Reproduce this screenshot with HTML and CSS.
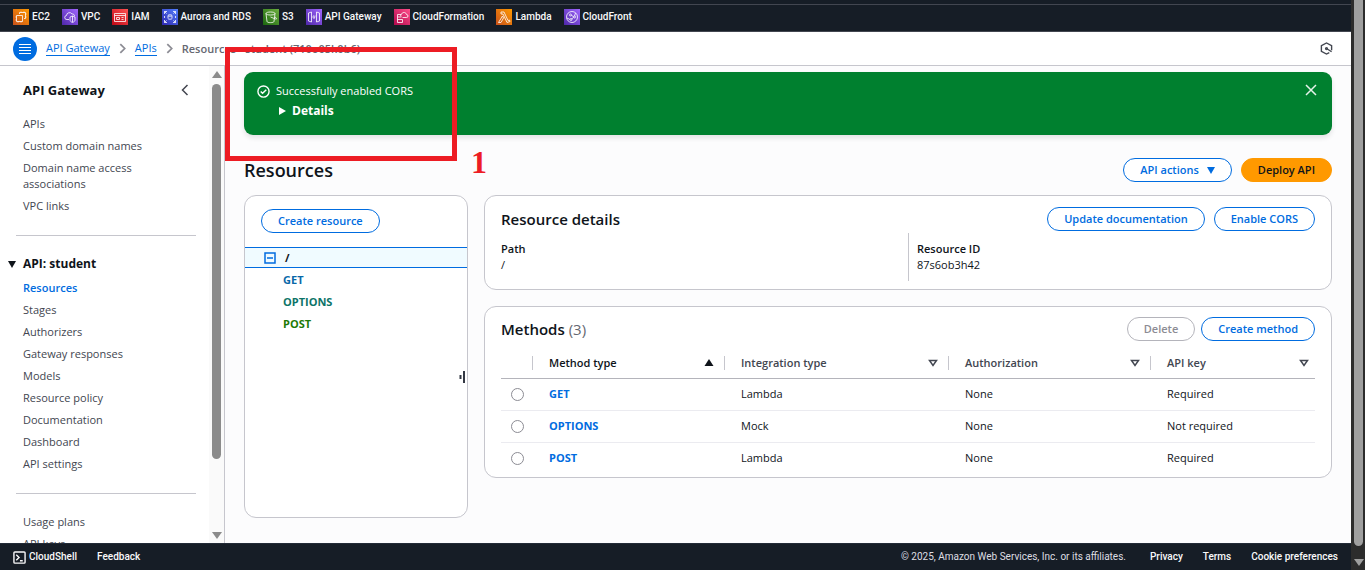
FILE: index.html
```html
<!doctype html>
<html lang="en">

<head>
  <meta charset="UTF-8" />
  <meta name="viewport" content="width=device-width, initial-scale=1.0" />
  <title>API Gateway - Resources</title>
  <link rel="stylesheet" href="styles.css">
</head>

<body>
  <div class="page">
    <nav class="favorites" aria-label="Favorites">
      <a href="#">
        <svg class="service orange" viewBox="0 0 16 16"><path d="M3.500 6.500h6v6h-6zM6.500 5v-1.500h6v6H11M2.500 8h1M2.500 11h1M5 13.500v-1M8 13.500v-1M8 2.500v1M11 2.500v1M13.500 5h-1M13.500 8h-1" /></svg>
        EC2
      </a>
      <a href="#">
        <svg class="service purple" viewBox="0 0 16 16"><path d="M7 10.500H5a2 2 0 0 1-.5-4 3 3 0 0 1 5.500-1.500 2 2 0 0 1 2.500 2M8 8l2.500-1L13 8v3c0 1-1 2-2.500 2.500C9 13 8 12 8 11zM10.500 7v6" /></svg>
        VPC
      </a>
      <a href="#">
        <svg class="service red" viewBox="0 0 16 16"><path d="M2.500 4.500h11v8h-11zM2.500 6.500h11M4.500 8.500h3v2h-3zM9.500 8.500h2M9.500 10.500h2" /></svg>
        IAM
      </a>
      <a href="#">
        <svg class="service blue" viewBox="0 0 16 16"><path d="M2.500 5V2.500H5M11 2.500h2.500V5M2.500 11v2.500H5M13.500 11v2.500H11M2.500 2.500l2 2M13.500 2.500l-2 2M2.500 13.500l2-2M13.500 13.500l-2-2M6 6.500c0-1 4-1 4 0v3c0 1-4 1-4 0zM6 6.500c0 1 4 1 4 0M2.500 7v2M13.500 7v2" /></svg>
        Aurora and RDS
      </a>
      <a href="#">
        <svg class="service green" viewBox="0 0 16 16"><path d="M3 4.500c0-2 9-2 9 0s-9 2-9 0l1 8c0 1.500 7 1.500 7 0l1-8M7.500 8l5 2c1.500.5 1.500-1-.5-2" /></svg>
        S3
      </a>
      <a href="#">
        <svg class="service purple" viewBox="0 0 16 16"><path d="M5.500 3v10l-3-1V4zM10.500 3v10l3-1V4zM7.500 6.500L7 8l.5 1.500M9 6.500L8.500 9.500" /></svg>
        API Gateway
      </a>
      <a href="#">
        <svg class="service pink" viewBox="0 0 16 16"><path d="M3.500 5.500h4M3.500 5.500v8h5v-3h-5M3.500 8h4M8.500 8.500h4a1.500 1.500 0 0 0 0-3 2.500 2.500 0 0 0-4.500-1 2 2 0 0 0-1 3" /></svg>
        CloudFormation
      </a>
      <a href="#">
        <svg class="service orange" viewBox="0 0 16 16"><path d="M5 3h3l4 8.500 1.500-.5.5 1.500-3 1L7 5H5zM6.500 7l1 2-2.500 4.500H2.500z" /></svg>
        Lambda
      </a>
      <a href="#">
        <svg class="service purple" viewBox="0 0 16 16"><circle cx="8" cy="8" r="5.500" /><circle cx="6.500" cy="6" r="1" /><circle cx="10.500" cy="8" r="1" /><circle cx="7" cy="10.500" r="1" /><path d="M7.500 6.500l2 1M9.500 8.500l-2 1.500M3 9l3 1.500M10.500 7l1-3" /></svg>
        CloudFront
      </a>
    </nav>

    <header class="breadcrumb-bar">
      <button class="menu-button" type="button" aria-label="Open navigation">
        <svg viewBox="0 0 24 24"><path d="M6 7.500h12M6 10.500h12M6 13.500h12M6 16.500h12" /></svg>
      </button>
      <nav class="breadcrumbs" aria-label="Breadcrumbs">
        <a href="#">API Gateway</a>
        <svg class="separator" viewBox="0 0 8 12"><path d="M1.500 1l5 5-5 5" /></svg>
        <a href="#">APIs</a>
        <svg class="separator" viewBox="0 0 8 12"><path d="M1.500 1l5 5-5 5" /></svg>
        <span>Resources - student (710o05k0b6)</span>
      </nav>
      <button class="tools-button" type="button" aria-label="Open tools">
        <svg viewBox="0 0 14 14"><path d="M12.500 9V4L7 1 1.500 4v6L7 13l3-1.500M7 7l5.500 3.500" /><circle cx="7" cy="7" r="1" /></svg>
      </button>
    </header>

    <div class="workspace">
      <aside class="sidebar">
        <div class="sidebar-content">
          <div class="sidebar-title">
            <h2>API Gateway</h2>
            <button type="button" aria-label="Close navigation">
              <svg viewBox="0 0 8 12"><path d="M6.500 1l-5 5 5 5" /></svg>
            </button>
          </div>
          <ul>
            <li><a href="#">APIs</a></li>
            <li><a href="#">Custom domain names</a></li>
            <li><a href="#">Domain name access associations</a></li>
            <li><a href="#">VPC links</a></li>
          </ul>
          <hr>
          <h3>API: student</h3>
          <ul>
            <li><a class="active" href="#">Resources</a></li>
            <li><a href="#">Stages</a></li>
            <li><a href="#">Authorizers</a></li>
            <li><a href="#">Gateway responses</a></li>
            <li><a href="#">Models</a></li>
            <li><a href="#">Resource policy</a></li>
            <li><a href="#">Documentation</a></li>
            <li><a href="#">Dashboard</a></li>
            <li><a href="#">API settings</a></li>
          </ul>
          <hr>
          <ul>
            <li><a href="#">Usage plans</a></li>
            <li><a href="#">API keys</a></li>
          </ul>
        </div>
        <div class="scrollbar">
          <span class="arrow-up"></span>
          <span class="thumb"></span>
          <span class="arrow-down"></span>
        </div>
      </aside>

      <main class="content">
        <section class="flash" role="status">
          <svg class="flash-icon" viewBox="0 0 14 14"><circle cx="7" cy="7" r="6" /><path d="M4 7l2 2 4-4" /></svg>
          <div class="flash-text">
            <p>Successfully enabled CORS</p>
            <button type="button">Details</button>
          </div>
          <button class="flash-close" type="button" aria-label="Dismiss">
            <svg viewBox="0 0 12 12"><path d="M1 1l10 10M11 1L1 11" /></svg>
          </button>
        </section>

        <div class="page-header">
          <h1>Resources</h1>
          <div class="actions">
            <button class="btn with-caret" type="button">API actions</button>
            <button class="btn primary" type="button">Deploy API</button>
          </div>
        </div>

        <div class="panels">
          <section class="card tree">
            <button class="btn" type="button">Create resource</button>
            <div class="tree-root">
              <button type="button" aria-label="Collapse">
                <svg viewBox="0 0 12 12"><path d="M1 1h10v10H1zM3 6h6" /></svg>
              </button>
              <span>/</span>
            </div>
            <ul>
              <li><a class="get" href="#">GET</a></li>
              <li><a class="options" href="#">OPTIONS</a></li>
              <li><a class="post" href="#">POST</a></li>
            </ul>
            <svg class="resize-handle" viewBox="0 0 6 12"><path d="M1.500 4v4M5 0v12" /></svg>
          </section>

          <div class="details">
            <section class="card resource">
              <div class="card-header">
                <h2>Resource details</h2>
                <div class="actions">
                  <button class="btn" type="button">Update documentation</button>
                  <button class="btn" type="button">Enable CORS</button>
                </div>
              </div>
              <dl>
                <div>
                  <dt>Path</dt>
                  <dd>/</dd>
                </div>
                <div>
                  <dt>Resource ID</dt>
                  <dd>87s6ob3h42</dd>
                </div>
              </dl>
            </section>

            <section class="card methods">
              <div class="card-header">
                <h2>Methods <span>(3)</span></h2>
                <div class="actions">
                  <button class="btn" type="button" disabled>Delete</button>
                  <button class="btn" type="button">Create method</button>
                </div>
              </div>
              <table>
                <colgroup>
                  <col class="col-select">
                  <col class="col-method">
                  <col class="col-integration">
                  <col class="col-auth">
                  <col>
                </colgroup>
                <thead>
                  <tr>
                    <th><div></div></th>
                    <th class="sorted"><div>Method type <svg viewBox="0 0 10 8"><path d="M5 0l4.500 7h-9z" /></svg></div></th>
                    <th><div>Integration type <svg viewBox="0 0 10 8"><path d="M1.500 1.500h7L5 6.500z" /></svg></div></th>
                    <th><div>Authorization <svg viewBox="0 0 10 8"><path d="M1.500 1.500h7L5 6.500z" /></svg></div></th>
                    <th><div>API key <svg viewBox="0 0 10 8"><path d="M1.500 1.500h7L5 6.500z" /></svg></div></th>
                  </tr>
                </thead>
                <tbody>
                  <tr>
                    <td><input type="radio" name="method" aria-label="GET"></td>
                    <td><a href="#">GET</a></td>
                    <td>Lambda</td>
                    <td>None</td>
                    <td>Required</td>
                  </tr>
                  <tr>
                    <td><input type="radio" name="method" aria-label="OPTIONS"></td>
                    <td><a href="#">OPTIONS</a></td>
                    <td>Mock</td>
                    <td>None</td>
                    <td>Not required</td>
                  </tr>
                  <tr>
                    <td><input type="radio" name="method" aria-label="POST"></td>
                    <td><a href="#">POST</a></td>
                    <td>Lambda</td>
                    <td>None</td>
                    <td>Required</td>
                  </tr>
                </tbody>
              </table>
            </section>
          </div>
        </div>
      </main>
    </div>

    <footer class="footer">
      <a href="#">
        <svg viewBox="0 0 14 14"><rect x="1" y="1" width="12" height="12" rx="1" /><path d="M3.500 4l3 3-3 3M7.500 10.500h3" /></svg>
        CloudShell
      </a>
      <a href="#">Feedback</a>
      <p>© 2025, Amazon Web Services, Inc. or its affiliates.</p>
      <a href="#">Privacy</a>
      <a href="#">Terms</a>
      <a href="#">Cookie preferences</a>
    </footer>
  </div>

  <div class="page-scrollbar">
    <span class="thumb"></span>
    <span class="arrow-down"></span>
  </div>

  <!-- step marker -->
  <div class="callout"></div>
  <span class="callout-number">1</span>
</body>

</html>
```
FILE: styles.css
```css
* {
  box-sizing: border-box;
}

body {
  margin: 0;
  height: 100vh;
  display: flex;
  overflow: hidden;
  font-family: "Open Sans", "Noto Sans", sans-serif;
  font-size: 11px;
  line-height: 16px;
  color: #0f141a;
}

h1,
h2,
h3,
p,
ul,
dl,
dd {
  margin: 0;
  padding: 0;
}

ul {
  list-style: none;
}

a {
  color: inherit;
  text-decoration: none;
}

button {
  padding: 0;
  border: none;
  background: none;
  color: inherit;
  font: inherit;
  cursor: pointer;
}

svg {
  display: block;
  flex: none;
  fill: none;
  stroke: currentColor;
}

.page {
  flex: 1;
  min-width: 0;
  display: flex;
  flex-direction: column;
}

/* Top bar */
.favorites {
  flex: none;
  height: 32px;
  padding: 0 13px 1px;
  border-top: 4px solid #161d26;
  border-bottom: 1px solid #424650;
  box-shadow: inset 0 1px #424650;
  display: flex;
  align-items: center;
  gap: 12px;
  background: #161d26;
  color: #f9f9fa;
  font-family: Roboto, sans-serif;
  font-size: 10px;
  font-weight: 500;
}

.favorites a {
  display: flex;
  align-items: center;
  gap: 3px;
}

.service {
  width: 16px;
  height: 16px;
  color: rgba(255, 255, 255, 0.8);
}

.orange {
  background: linear-gradient(45deg, #c8511b, #f90);
}

.purple {
  background: linear-gradient(45deg, #4d27a8, #a166ff);
}

.red {
  background: linear-gradient(45deg, #bd0816, #ff5252);
}

.blue {
  background: linear-gradient(45deg, #2e27ad, #527fff);
}

.green {
  background: linear-gradient(45deg, #1b660f, #6cae3e);
}

.pink {
  background: linear-gradient(45deg, #b0084d, #ff4f8b);
}

.breadcrumb-bar {
  flex: none;
  height: 34px;
  padding: 0 18px 0 13px;
  border-bottom: 1px solid #c6c6cd;
  display: flex;
  align-items: center;
  background: #fff;
}

.menu-button {
  width: 24px;
  height: 24px;
  border-radius: 50%;
  background: #006ce0;
  color: #fff;
}

.menu-button svg {
  stroke-width: 1;
}

.breadcrumbs {
  flex: 1;
  margin-left: 9px;
  display: flex;
  align-items: center;
  gap: 9px;
  color: #656871;
  font-weight: 600;
}

.breadcrumbs a {
  border-bottom: 1px solid #006ce0;
  color: #006ce0;
  font-weight: 400;
  line-height: 14px;
}

.separator {
  width: 7px;
  height: 11px;
  color: #8c8c94;
  stroke-width: 2;
}

.tools-button svg {
  width: 13px;
  height: 13px;
  color: #424650;
  stroke-width: 1.5;
}

.workspace {
  flex: 1;
  min-height: 0;
  display: flex;
}

/* Side navigation */
.sidebar {
  flex: none;
  width: 225px;
  border-right: 1px solid #c6c6cd;
  display: flex;
  overflow: hidden;
  background: #fff;
}

.sidebar-content {
  flex: 1;
  padding: 15px 13px 0 16px;
  color: #424650;
}

.sidebar-title {
  margin-bottom: 17px;
  padding: 0 7px;
  display: flex;
  align-items: center;
  justify-content: space-between;
  color: #0f141a;
}

.sidebar-title h2 {
  font-size: 13px;
  line-height: 18px;
}

.sidebar-title svg {
  width: 8px;
  height: 12px;
  color: #424650;
  stroke-width: 1.5;
}

.sidebar-content ul {
  padding: 0 40px 0 7px;
  display: grid;
  gap: 6px;
}

.sidebar-content hr {
  margin: 21px 0 20px;
  border: none;
  border-top: 1px solid #c6c6cd;
}

.sidebar-content h3 {
  margin-bottom: 8px;
  display: flex;
  align-items: center;
  gap: 7px;
  margin-left: -8px;
  color: #0f141a;
  font-size: 12px;
}

.sidebar-content h3::before {
  content: "";
  border: 4px solid transparent;
  border-top: 7px solid #0f141a;
  border-bottom: none;
}

.active {
  color: #006ce0;
  font-weight: 600;
}

.scrollbar {
  width: 15px;
  padding: 5px 3px 4px;
  display: flex;
  flex-direction: column;
  align-items: center;
  background: #fafafa;
}

.scrollbar .thumb {
  width: 9px;
  height: 375px;
  margin: 6px 0 auto;
  border-radius: 5px;
  background: #8b8b8b;
}

.arrow-up,
.arrow-down {
  border: 5px solid transparent;
}

.arrow-up {
  border-top: none;
  border-bottom: 7px solid #8b8b8b;
}

.arrow-down {
  border-top: 7px solid #8b8b8b;
  border-bottom: none;
}

/* Main column */
.content {
  flex: 1;
  min-width: 0;
  padding: 6px 19px 25px;
  display: flex;
  flex-direction: column;
  background: #fcfcfd;
}

.flash {
  padding: 11px 15px 15px 13px;
  border-radius: 9px;
  display: flex;
  align-items: flex-start;
  gap: 6px;
  background: #00802f;
  box-shadow: 0 3px 5px rgba(0, 7, 22, 0.1);
  color: #fff;
}

.flash-icon {
  width: 13px;
  height: 13px;
  margin-top: 2px;
  stroke-width: 1.5;
}

.flash-text {
  flex: 1;
}

.flash-text button {
  margin: 3px 0 0 3px;
  display: flex;
  align-items: center;
  gap: 6px;
  font-size: 12px;
  font-weight: 700;
  line-height: 18px;
}

.flash-text button::before {
  content: "";
  border: 4px solid transparent;
  border-left: 7px solid #fff;
  border-right: none;
}

.flash-close svg {
  width: 12px;
  height: 12px;
  margin-top: 1px;
  stroke-width: 1.5;
  opacity: 0.9;
}

.page-header {
  margin: 23px 0 13px;
  display: flex;
  align-items: center;
  justify-content: space-between;
}

.page-header h1 {
  font-size: 18px;
  font-weight: 600;
  line-height: 24px;
}

.actions {
  display: flex;
  gap: 9px;
}

.btn {
  height: 24px;
  padding: 0 16px;
  border: 1px solid #006ce0;
  border-radius: 12px;
  background: #fff;
  color: #006ce0;
  font-weight: 600;
}

.btn.primary {
  border-color: #f90;
  background: #f90;
  color: #0f141a;
}

.btn:disabled {
  border-color: #b4b4bb;
  color: #8c8c94;
  cursor: default;
}

.with-caret {
  display: flex;
  align-items: center;
  gap: 8px;
}

.with-caret::after {
  content: "";
  border: 4px solid transparent;
  border-top: 7px solid #006ce0;
  border-bottom: none;
}

.panels {
  flex: 1;
  display: flex;
  gap: 16px;
}

.card {
  border: 1px solid #c6c6cd;
  border-radius: 12px;
  background: #fff;
}

/* Resource tree */
.tree {
  position: relative;
  flex: none;
  width: 224px;
}

.tree > .btn {
  margin: 13px 16px 14px;
}

.tree-root {
  height: 21px;
  padding: 0 19px;
  border-top: 1px solid #006ce0;
  border-bottom: 1px solid #006ce0;
  display: flex;
  align-items: center;
  gap: 9px;
  background: #f0fbff;
  font-weight: 700;
}

.tree-root svg {
  width: 12px;
  height: 12px;
  color: #006ce0;
  stroke-width: 1.5;
}

.tree ul {
  padding: 4px 38px;
  display: grid;
  gap: 6px;
  font-weight: 700;
}

.get {
  color: #0968a8;
}

.options {
  color: #0d7468;
}

.post {
  color: #1d7a06;
}

.resize-handle {
  position: absolute;
  right: 2px;
  top: 175px;
  width: 6px;
  height: 12px;
  color: #333843;
  stroke-width: 2;
}

/* Resource details */
.details {
  flex: 1;
  min-width: 0;
  display: flex;
  flex-direction: column;
  gap: 16px;
}

.card-header {
  display: flex;
  align-items: center;
  justify-content: space-between;
}

.card-header h2 {
  font-size: 15px;
  font-weight: 600;
  line-height: 20px;
}

.card-header h2 span {
  color: #656871;
  font-weight: 400;
}

.resource {
  padding: 11px 16px 8px;
}

.resource dl {
  margin-top: 2px;
  display: grid;
  grid-template-columns: 1fr 1fr;
}

.resource dl div {
  padding: 8px 0;
}

.resource dl div + div {
  padding-left: 8px;
  border-left: 1px solid #c6c6cd;
}

.resource dt {
  font-weight: 600;
}

.methods {
  padding: 10px 16px 3px;
}

.methods .actions {
  gap: 6px;
}

table {
  width: 100%;
  margin-top: 7px;
  border-collapse: collapse;
  table-layout: fixed;
}

.col-select {
  width: 32px;
}

.col-method {
  width: 192px;
}

.col-integration {
  width: 224px;
}

.col-auth {
  width: 202px;
}

th,
td {
  padding: 0;
  text-align: left;
}

th {
  height: 30px;
  border-bottom: 1px solid #b4b4bb;
  color: #424650;
  font-weight: 600;
}

th div {
  height: 14px;
  padding: 0 10px 0 16px;
  border-right: 1px solid #c6c6cd;
  display: flex;
  align-items: center;
  justify-content: space-between;
}

th:last-child div {
  padding-right: 6px;
  border-right: none;
}

th svg {
  width: 10px;
  height: 8px;
  stroke-width: 1.5;
}

.sorted {
  color: #0f141a;
}

.sorted svg {
  fill: currentColor;
  stroke: none;
}

td {
  height: 32px;
  padding-left: 16px;
  border-bottom: 1px solid #ebebf0;
}

td:first-child {
  padding-left: 10px;
}

tbody tr:last-child td {
  border-bottom: none;
}

td a {
  color: #006ce0;
  font-weight: 700;
}

td input {
  appearance: none;
  width: 13px;
  height: 13px;
  margin: 0;
  border: 1px solid #8c8c94;
  border-radius: 50%;
  display: block;
  background: #fff;
}

/* Footer */
.footer {
  flex: none;
  height: 27px;
  padding: 0 13px;
  border-top: 1px solid #232b37;
  display: flex;
  align-items: center;
  gap: 20px;
  background: #161d26;
  color: #f9f9fa;
  font-family: Roboto, sans-serif;
  font-size: 10px;
  font-weight: 500;
}

.footer a {
  display: flex;
  align-items: center;
  gap: 3px;
}

.footer svg {
  width: 13px;
  height: 13px;
  stroke-width: 1.5;
}

.footer p {
  margin-left: auto;
  margin-right: 4px;
  color: #dedee3;
  font-weight: 400;
}

.page-scrollbar {
  flex: none;
  width: 14px;
  padding: 0 2px 4px 3px;
  display: flex;
  flex-direction: column;
  align-items: center;
  gap: 13px;
  background: #2c2c2c;
}

.page-scrollbar .thumb {
  flex: 1;
  width: 9px;
  border-radius: 0 0 5px 5px;
  background: #9f9f9f;
}

.page-scrollbar .arrow-down {
  border-top-color: #9f9f9f;
}

/* Step marker drawn over the page */
.callout {
  position: absolute;
  left: 225px;
  top: 47px;
  width: 232px;
  height: 114px;
  border: 5px solid #ed1c24;
}

.callout-number {
  position: absolute;
  left: 471px;
  top: 146px;
  color: #ed1c24;
  font-family: "Liberation Serif", serif;
  font-size: 32px;
  font-weight: 700;
  line-height: 32px;
}
```
